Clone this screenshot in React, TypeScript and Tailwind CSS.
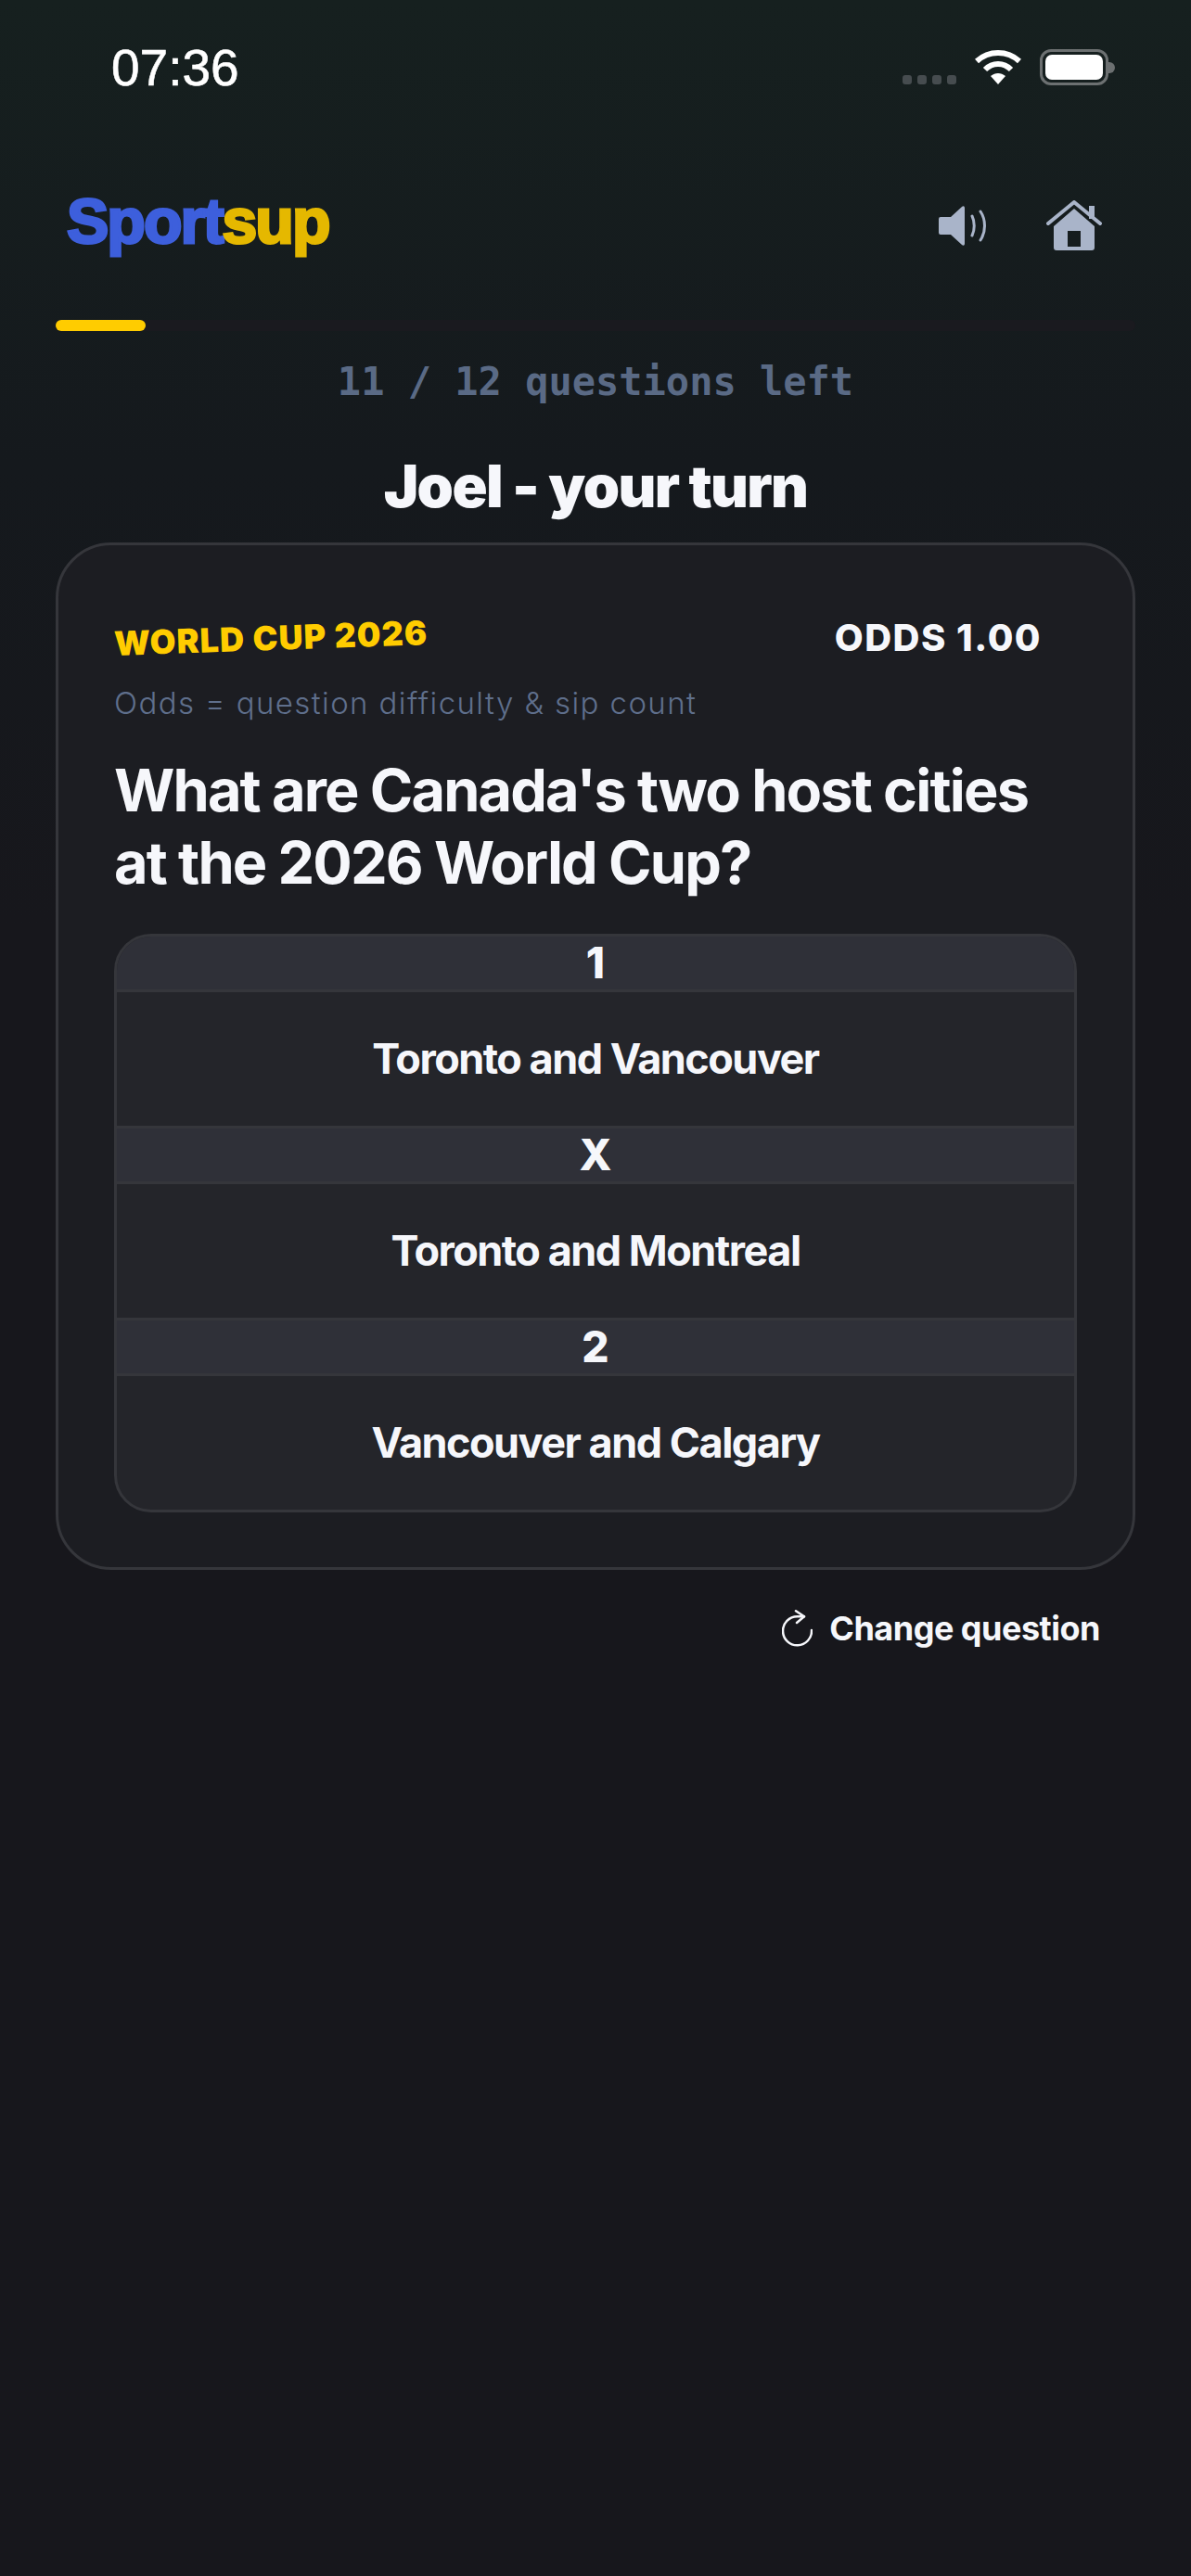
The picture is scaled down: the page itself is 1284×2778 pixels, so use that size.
const inter = 'font-["Inter",sans-serif]';

function StatusBar() {
  return (
    <div className="flex h-[145px] items-start justify-between pl-[120px] pr-[82px] pt-[41px]">
      <span className='font-["Liberation_Sans",sans-serif] text-[55px] leading-[64px] text-white [-webkit-text-stroke:0.6px_#fff]'>07:36</span>
      <div className="flex items-start gap-[20px] pt-[12px]">
        <div className="mt-[28px] flex gap-[6px]">
          <span className="h-[10px] w-[10px] rounded-[3px] bg-[#464c4f]" />
          <span className="h-[10px] w-[10px] rounded-[3px] bg-[#464c4f]" />
          <span className="h-[10px] w-[10px] rounded-[3px] bg-[#464c4f]" />
          <span className="h-[10px] w-[10px] rounded-[3px] bg-[#464c4f]" />
        </div>
        <svg width="50" height="38" viewBox="0 0 50 38">
          <path d="M2 13 C15 1 35 1 48 13" fill="none" stroke="#fff" strokeWidth="6" />
          <path d="M11 22 C19 14 31 14 39 22" fill="none" stroke="#fff" strokeWidth="6" />
          <path d="M17 29 C22 25 28 25 33 29 L25 38 Z" fill="#fff" />
        </svg>
        <div className="flex items-center">
          <div className="h-[39px] w-[74px] rounded-[12px] border-[3px] border-[#6c7071] p-[3px]">
            <div className="h-full w-full rounded-[7px] bg-white" />
          </div>
          <span className="h-[12px] w-[7px] rounded-r-full bg-[#6c7071]" />
        </div>
      </div>
    </div>
  );
}

function Header() {
  return (
    <div className="flex h-[200px] items-start justify-between pl-[72px] pr-[96px] pt-[55px]">
      <div className='font-["Liberation_Sans",sans-serif] text-[68px] font-bold leading-[76px] tracking-[-2px] [-webkit-text-stroke:3px_currentColor]'>
        <span className="text-[#3d5fdc]">Sport</span>
        <span className="text-[#e5b800]">sup</span>
      </div>
      <div className="flex items-start gap-[63px] pt-[16px]">
        <svg width="53" height="43" viewBox="0 0 53 43" className="mt-[6px]" fill="#a9b4c9">
          <path d="M0 14 a2 2 0 0 1 2-2 h11 L25 1 c1.500-1.500 3-.7 3 1.500 v38 c0 2.200-1.500 3-3 1.500 L13 31 H2 a2 2 0 0 1-2-2 Z" />
          <path d="M36 11 C39 17 39 26 36 32" fill="none" stroke="#a9b4c9" strokeWidth="3" strokeLinecap="round" />
          <path d="M45 6 C51 15 51 28 45 37" fill="none" stroke="#a9b4c9" strokeWidth="3" strokeLinecap="round" />
        </svg>
        <svg width="60" height="54" viewBox="0 0 60 54" fill="#a9b4c9">
          <path d="M2 25 L30 2 L58 25" fill="none" stroke="#a9b4c9" strokeWidth="4" strokeLinecap="round" strokeLinejoin="round" />
          <rect x="46" y="6" width="6" height="14" />
          <path fillRule="evenodd" d="M30 9 L52 28 V51 a3 3 0 0 1-3 3 H11 a3 3 0 0 1-3-3 V28 Z M23 33 V50 H37 V33 Z" />
        </svg>
      </div>
    </div>
  );
}

function OptionRow({ label, text, last }: { label: string; text: string; last?: boolean }) {
  return (
    <div>
      <div className={`flex h-[60px] items-center justify-center border-b-[3px] border-[#35363b] bg-[#2f3038] pb-[2px] text-[46px] font-extrabold leading-none text-[#f6f7fb] ${inter}`}>
        {label}
      </div>
      <div className={`flex items-center justify-center ${last ? "h-[144px]" : "h-[147px] border-b-[3px] border-[#35363b]"} text-[45px] font-bold tracking-[-1.5px] text-[#f6f7fb] ${inter}`}>
        {text}
      </div>
    </div>
  );
}

export default function App() {
  return (
    <div className="min-h-[2778px] bg-[linear-gradient(to_bottom,#16201f_0px,#15191d_500px,#17171c_1000px)]">
      <StatusBar />
      <Header />

      <div className="mx-[60px] h-[12px] rounded-full bg-[#1a1a1f]">
        <div className="h-full w-[97px] rounded-full bg-[#ffcc00]" />
      </div>

      <p className='mt-[28px] text-center font-["DejaVu_Sans_Mono",monospace] text-[42px] font-bold leading-[54px] text-[#5a6a85]'>
        11 / 12 questions left
      </p>

      <h1 className={`mt-[49px] text-center text-[63px] font-black leading-[72px] tracking-[-1.6px] text-[#f6f7fb] ${inter}`}>
        Joel - your turn
      </h1>

      <div className="mx-[60px] mt-[25px] h-[1108px] rounded-[60px] border-[3px] border-[#35363b] bg-[#1c1d22] px-[60px] pt-[78px]">
        <div className="flex items-start justify-between pr-[38px]">
          <span className={`inline-block -rotate-2 text-[36px] font-black leading-[44px] tracking-[1.1px] text-[#ffcc00] ${inter}`}>
            WORLD CUP 2026
          </span>
          <span className={`text-[40px] font-extrabold leading-[44px] tracking-[1.5px] text-[#f6f7fb] ${inter}`}>
            ODDS 1.00
          </span>
        </div>
        <p className={`mt-[26px] text-[33px] font-light leading-[44px] tracking-[1.4px] text-[#5f6f8c] ${inter}`}>
          Odds = question difficulty &amp; sip count
        </p>
        <h2 className={`mt-[33px] text-[63px] font-bold leading-[78px] tracking-[-1.85px] text-[#f6f7fb] ${inter}`}>
          What are Canada's two host cities
          <br />
          at the 2026 World Cup?
        </h2>

        <div className="mt-[38px] overflow-hidden rounded-[40px] border-[3px] border-[#35363b] bg-[#24252a]">
          <OptionRow label="1" text="Toronto and Vancouver" />
          <OptionRow label="X" text="Toronto and Montreal" />
          <OptionRow label="2" text="Vancouver and Calgary" last />
        </div>
      </div>

      <div className={`mt-[41px] flex items-center justify-end gap-[18px] pr-[98px] text-[36px] font-bold leading-[44px] tracking-[-0.5px] text-[#f6f7fb] ${inter}`}>
        <svg width="33" height="40" viewBox="0 0 33 40" fill="none" stroke="#f6f7fb" strokeWidth="2.5" strokeLinecap="round" strokeLinejoin="round">
          <path d="M24 7.300 H16.500 A 15.500 15.500 0 1 0 32 22" />
          <path d="M15 1.300 L 24 7.300 L 16 14" />
        </svg>
        <span>Change question</span>
      </div>
    </div>
  );
}
